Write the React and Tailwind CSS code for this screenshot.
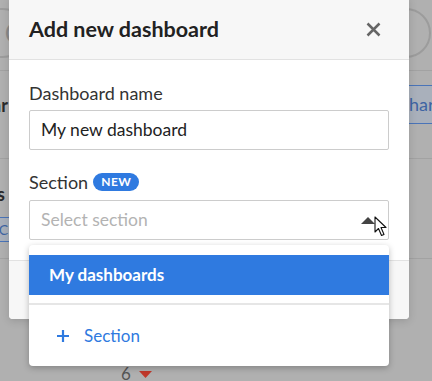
import React from "react";

function BgPage() {
  return (
    <div className="w-full h-full flex flex-col bg-[#b0b0b0] overflow-hidden">
      <div className="h-[71px] shrink-0 border-b border-[#a2a2a2] flex items-start justify-between pt-[8px]">
        <div className="ml-[-40px] w-[68px] h-[50px] rounded-full border-2 border-[#9c9c9c] flex items-center justify-end pr-[4px] text-[26px] text-[#8a8a8a]">C</div>
        <div className="mr-[1px] w-[60px] h-[50px] rounded-full border-2 border-[#9c9c9c]" />
      </div>
      <div className="h-[88px] shrink-0 border-b border-[#a2a2a2] flex items-center justify-between">
        <span className="ml-[-8px] mt-[-18px] text-[18px] font-bold text-[#2a2a2a]">ar</span>
        <div className="mr-[-20px] mt-[-20px] w-[44px] h-[39px] border-y border-[#4a74b8] bg-[#a9b0bb] flex items-center pl-[1px] text-[18px] text-[#3e64a3]">har</div>
      </div>
      <div className="h-[100px] shrink-0 border-b border-[#a2a2a2] flex flex-col items-start pt-[24px] gap-[12px]">
        <span className="ml-[-3px] text-[18px] leading-[22px] font-bold text-[#2a2a2a]">s</span>
        <div className="ml-[-30px] w-[40px] h-[25px] border border-[#4a74b8] bg-[#a9b0bb] flex items-center justify-end pr-[1px] text-[14px] text-[#3e64a3]">IC</div>
      </div>
      <div className="flex-1 flex items-end pl-[121px]">
        <div className="flex items-center gap-[8px] text-[17px] leading-[20px] text-[#555] mb-[-3px]">
          <span>6</span>
          <svg width="13" height="7" viewBox="0 0 13 7"><path d="M0 0 H13 L6.5 7 Z" fill="#c0392b" /></svg>
        </div>
      </div>
    </div>
  );
}

export default function App() {
  const font = { fontFamily: "Lato, 'Noto Sans', sans-serif" };
  return (
    <div className="relative w-[432px] h-[381px] overflow-hidden bg-[#b0b0b0]" style={font}>
      <BgPage />

      {/* modal */}
      <div className="absolute left-[9px] top-[-4px] w-[400px] h-[323px] rounded-[4px] bg-white flex flex-col overflow-hidden shadow-[0_2px_8px_rgba(0,0,0,0.15)]">
        <div className="h-[64px] shrink-0 bg-[#f7f7f7] border-b border-[#e2e2e2] flex items-center justify-between pl-[20px] pr-[28px] pt-[4px]">
          <span className="text-[21.5px] font-bold text-[#222]">Add new dashboard</span>
          <svg width="15" height="15" viewBox="0 0 15 15">
            <path d="M1.5 1.5 L13.5 13.5 M13.5 1.5 L1.5 13.5" stroke="#666" strokeWidth="2.5" />
          </svg>
        </div>
        <div className="flex-1 px-[20px] pt-[21px]">
          <div className="text-[18px] leading-[24px] text-[#333]">Dashboard name</div>
          <div className="mt-[5px] h-[40px] border border-[#ccc] rounded-[2px] flex items-center px-[11px] text-[17.5px] text-[#222]">My new dashboard</div>
          <div className="mt-[20px] flex items-center gap-[5px] h-[24px]">
            <span className="text-[18px] text-[#333]">Section</span>
            <span className="h-[18px] px-[8px] rounded-full bg-[#2f7ae0] text-white text-[12px] font-bold tracking-[0.5px] flex items-center">NEW</span>
          </div>
          <div className="mt-[6px] h-[40px] border border-[#ccc] rounded-[2px] flex items-center justify-between px-[11px] text-[17.5px] text-[#b3b3b3]">
            <span>Select section</span>
            <svg width="14" height="7" viewBox="0 0 14 7" className="mr-[2px]"><path d="M0 7 L7 0 L14 7 Z" fill="#444" /></svg>
          </div>
        </div>
        <div className="h-[59px] shrink-0 bg-[#f7f7f7] border-t border-[#e2e2e2]" />
      </div>

      {/* dropdown menu */}
      <div className="absolute left-[29px] top-[245px] w-[360px] h-[121px] bg-white rounded-[4px] shadow-[0_2px_6px_rgba(0,0,0,0.25)] pt-[10px] flex flex-col">
        <div className="h-[40px] bg-[#2f7ae0] flex items-center pl-[20px] text-[17px] font-bold text-white">My dashboards</div>
        <div className="h-[8px]" />
        <div className="h-[2px] bg-[#e6e6e6]" />
        <div className="flex-1 flex items-center pl-[28px] gap-[15px] text-[17px] text-[#2f7ae0]">
          <svg width="12" height="12" viewBox="0 0 12 12"><path d="M6 0 V12 M0 6 H12" stroke="#2f7ae0" strokeWidth="2.2" /></svg>
          <span>Section</span>
        </div>
      </div>

      {/* cursor */}
      <svg className="absolute left-[374px] top-[216px]" width="14" height="22" viewBox="0 0 14 22">
        <path d="M1 1 L1 16 L4.5 12.5 L7.5 19.5 L10 18.5 L7 11.5 L12 11.5 Z" fill="white" stroke="#111" strokeWidth="1.1" strokeLinejoin="round" />
      </svg>
    </div>
  );
}
